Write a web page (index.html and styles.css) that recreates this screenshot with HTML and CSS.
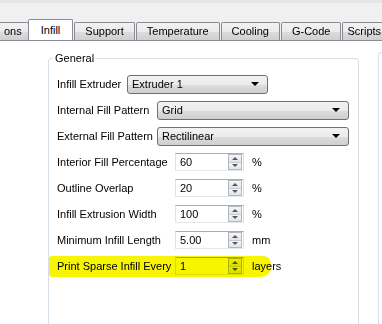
FILE: index.html
```html
<!DOCTYPE html>
<html lang="en">
<head>
    <meta charset="UTF-8">
    <meta name="viewport" content="width=device-width, initial-scale=1.0">
    <title>Infill Settings</title>
    <link rel="stylesheet" href="styles.css">
</head>
<body>
    <div class="window-top"></div>

    <div class="tabs">
        <div class="tab tab-first">ons</div>
        <div class="tab active">Infill</div>
        <div class="tab">Support</div>
        <div class="tab">Temperature</div>
        <div class="tab">Cooling</div>
        <div class="tab">G-Code</div>
        <div class="tab tab-last">Scripts</div>
    </div>

    <div class="pane">
        <fieldset class="group">
            <legend>General</legend>
            <div class="rows">
                <div class="row">
                    <label class="label-short">Infill Extruder</label>
                    <div class="combo combo-small"><span>Extruder 1</span><i class="arrow"></i></div>
                </div>
                <div class="row">
                    <label class="label-mid">Internal Fill Pattern</label>
                    <div class="combo combo-wide"><span>Grid</span><i class="arrow"></i></div>
                </div>
                <div class="row">
                    <label class="label-mid">External Fill Pattern</label>
                    <div class="combo combo-wide"><span>Rectilinear</span><i class="arrow"></i></div>
                </div>
                <div class="row">
                    <label class="label-long">Interior Fill Percentage</label>
                    <div class="spin"><span>60</span><div class="spin-btns"><b class="up"></b><b class="down"></b></div></div>
                    <span class="unit">%</span>
                </div>
                <div class="row">
                    <label class="label-long">Outline Overlap</label>
                    <div class="spin"><span>20</span><div class="spin-btns"><b class="up"></b><b class="down"></b></div></div>
                    <span class="unit">%</span>
                </div>
                <div class="row">
                    <label class="label-long">Infill Extrusion Width</label>
                    <div class="spin"><span>100</span><div class="spin-btns"><b class="up"></b><b class="down"></b></div></div>
                    <span class="unit">%</span>
                </div>
                <div class="row">
                    <label class="label-long">Minimum Infill Length</label>
                    <div class="spin"><span>5.00</span><div class="spin-btns"><b class="up"></b><b class="down"></b></div></div>
                    <span class="unit">mm</span>
                </div>
                <div class="row marked">
                    <label class="label-long">Print Sparse Infill Every</label>
                    <div class="spin"><span>1</span><div class="spin-btns"><b class="up"></b><b class="down"></b></div></div>
                    <span class="unit">layers</span>
                    <div class="marker"></div>
                </div>
            </div>
        </fieldset>
        <fieldset class="group group-next"></fieldset>
    </div>
</body>
</html>
```

FILE: styles.css
```css
body {
    margin: 0;
    width: 382px;
    height: 324px;
    overflow: hidden;
    background: #f0f0f0;
    font-family: "Liberation Sans", Arial, sans-serif;
    font-size: 11px;
    color: #000;
}
.window-top {
    height: 19px;
    border-top: 3px solid #e6e6e6;
    box-sizing: border-box;
}

/* tab strip */
.tabs {
    display: flex;
    align-items: flex-end;
    height: 21px;
    border-bottom: 1px solid #898c95;
    overflow: hidden;
}
.tab {
    flex-shrink: 0;
    height: 17px;
    line-height: 16px;
    padding: 0 10px;
    margin-right: 1px;
    border: 1px solid #898c95;
    border-bottom: none;
    border-radius: 2px 2px 0 0;
    background: linear-gradient(#f2f2f2, #ebebeb 50%, #dddddd 51%, #cfcfcf);
    white-space: nowrap;
    box-sizing: content-box;
}
.tab-first {
    margin-left: -3px;
    padding-left: 6px;
    padding-right: 6px;
}
.tab-last {
    padding-left: 4px;
}
.tab.active {
    height: 20px;
    line-height: 20px;
    margin: 0 -2px 0 -2px;
    padding: 0 12px;
    background: #fff;
    position: relative;
    z-index: 1;
}
.tab.active + .tab {
    margin-left: 3px;
}

/* tab page */
.pane {
    display: flex;
    background: #fff;
    padding: 11px 0 0 48px;
    height: 272px;
    overflow: hidden;
}
.group {
    flex-shrink: 0;
    margin: 0;
    width: 311px;
    height: 320px;
    padding: 0 0 0 8px;
    border: 1px solid #d5dfe5;
    border-radius: 3px;
    box-sizing: border-box;
}
.group legend {
    padding: 0 2px;
    margin-left: -4px;
}
.group-next {
    width: 40px;
    margin-left: 19px;
}
.rows {
    padding-top: 7px;
}
.row {
    display: flex;
    align-items: center;
    height: 26px;
    position: relative;
}
.label-short { width: 70px; }
.label-mid { width: 100px; }
.label-long { width: 118px; }

/* combo boxes */
.combo {
    display: flex;
    align-items: center;
    justify-content: space-between;
    height: 19px;
    padding: 0 8px 0 4px;
    border: 1px solid #707070;
    border-radius: 3px;
    background: linear-gradient(#f2f2f2, #ebebeb 50%, #dddddd 51%, #cfcfcf);
    box-sizing: border-box;
}
.combo-small { width: 141px; }
.combo-wide { width: 192px; }
.arrow {
    width: 0;
    height: 0;
    border-left: 4px solid transparent;
    border-right: 4px solid transparent;
    border-top: 4px solid #000;
}

/* spin controls */
.spin {
    display: flex;
    align-items: center;
    justify-content: space-between;
    width: 69px;
    height: 18px;
    padding: 0 1px 0 4px;
    border: 1px solid;
    border-color: #abadb3 #dbdfe6 #e3e9ef #e2e3ea;
    background: #fff;
    box-sizing: border-box;
}
.spin-btns {
    display: flex;
    flex-direction: column;
    width: 14px;
    height: 16px;
    border: 1px solid #b3b8c0;
    box-sizing: border-box;
}
.spin-btns b {
    flex: 1;
    display: flex;
    align-items: center;
    justify-content: center;
    background: linear-gradient(#f6f6f6, #e4e4e4);
}
.spin-btns b + b {
    border-top: 1px solid #c8ccd2;
}
.spin-btns b::after {
    content: "";
    border-left: 3px solid transparent;
    border-right: 3px solid transparent;
}
.spin-btns .up::after { border-bottom: 3px solid #4d5a6e; }
.spin-btns .down::after { border-top: 3px solid #4d5a6e; }
.unit {
    margin-left: 8px;
}

/* yellow highlighter stroke */
.marker {
    position: absolute;
    left: -8px;
    top: 3px;
    width: 222px;
    height: 21px;
    background: #f7f500;
    border-radius: 3px 8px 10px 4px;
    mix-blend-mode: multiply;
    pointer-events: none;
}
```
